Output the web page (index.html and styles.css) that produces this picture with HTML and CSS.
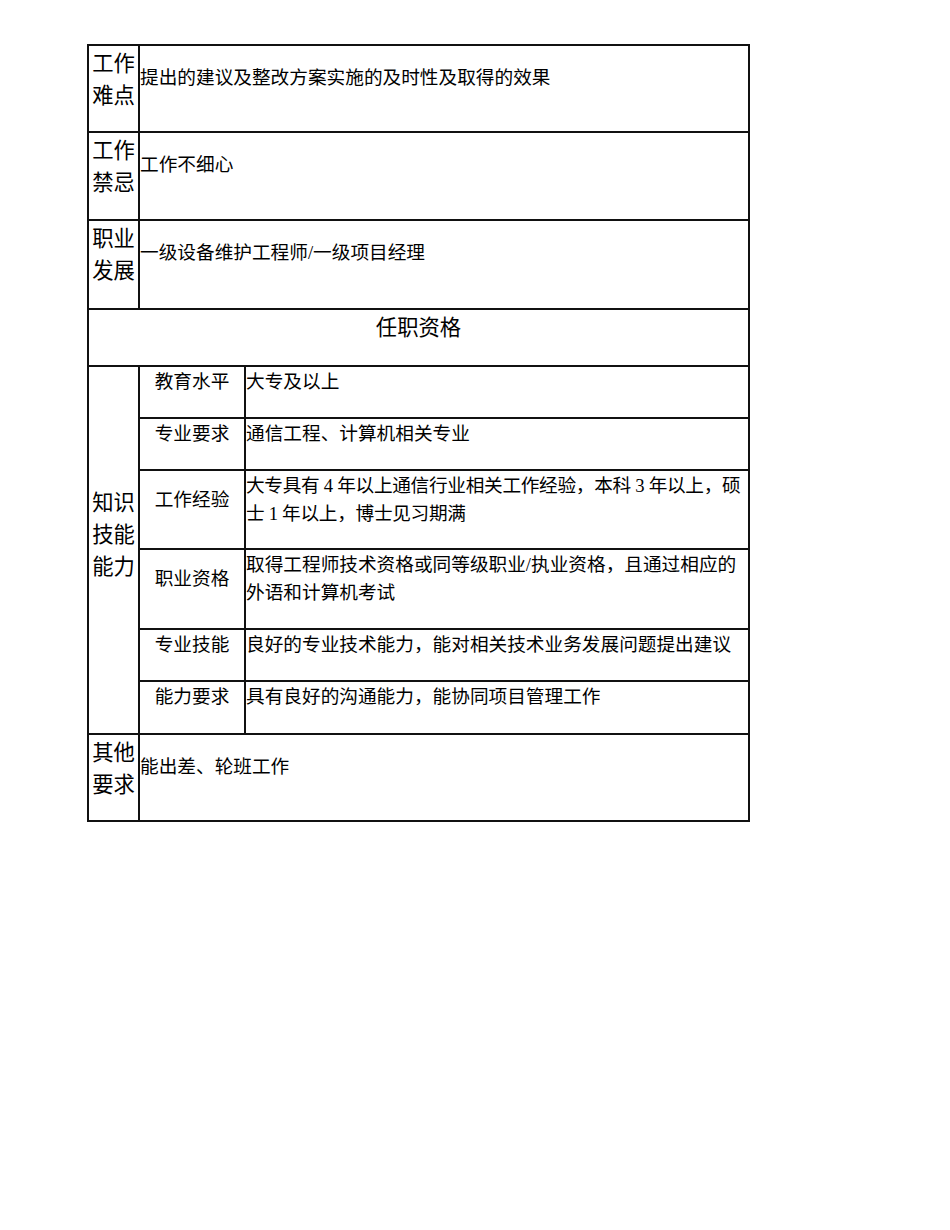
FILE: index.html
```html
<!DOCTYPE html>
<html lang="zh-CN">
<head>
<meta charset="utf-8">
<title>岗位说明</title>
<link rel="stylesheet" href="styles.css">
</head>
<body>
<table class="sheet">
  <colgroup>
    <col class="c1">
    <col class="c2">
    <col class="c3">
  </colgroup>
  <tr class="r-1">
    <td class="label">工作难点</td>
    <td class="text" colspan="2">提出的建议及整改方案实施的及时性及取得的效果</td>
  </tr>
  <tr class="r-2">
    <td class="label">工作禁忌</td>
    <td class="text" colspan="2">工作不细心</td>
  </tr>
  <tr class="r-3">
    <td class="label">职业发展</td>
    <td class="text" colspan="2">一级设备维护工程师/一级项目经理</td>
  </tr>
  <tr class="r-title">
    <td class="title" colspan="3">任职资格</td>
  </tr>
  <tr class="r-s1">
    <td class="label group" rowspan="6">知识技能能力</td>
    <td class="sublabel">教育水平</td>
    <td class="subtext">大专及以上</td>
  </tr>
  <tr class="r-s2">
    <td class="sublabel">专业要求</td>
    <td class="subtext">通信工程、计算机相关专业</td>
  </tr>
  <tr class="r-s3">
    <td class="sublabel two">工作经验</td>
    <td class="subtext tight">大专具有 4 年以上通信行业相关工作经验，本科 3 年以上，硕<br>士 1 年以上，博士见习期满</td>
  </tr>
  <tr class="r-s4">
    <td class="sublabel two">职业资格</td>
    <td class="subtext">取得工程师技术资格或同等级职业/执业资格，且通过相应的<br>外语和计算机考试</td>
  </tr>
  <tr class="r-s5">
    <td class="sublabel">专业技能</td>
    <td class="subtext">良好的专业技术能力，能对相关技术业务发展问题提出建议</td>
  </tr>
  <tr class="r-s6">
    <td class="sublabel">能力要求</td>
    <td class="subtext">具有良好的沟通能力，能协同项目管理工作</td>
  </tr>
  <tr class="r-last">
    <td class="label">其他要求</td>
    <td class="text" colspan="2">能出差、轮班工作</td>
  </tr>
</table>
</body>
</html>
```

FILE: styles.css
```css
html, body {
  margin: 0;
  padding: 0;
  background: #ffffff;
}

body {
  padding: 44px 0 0 87px;
  font-family: "Liberation Serif", "Noto Sans CJK SC", serif;
  color: #000000;
}

.sheet {
  border-collapse: collapse;
  table-layout: fixed;
  width: 661px;
}

.c1 { width: 51px; }
.c2 { width: 106px; }
.c3 { width: 504px; }

.sheet td {
  border: 2px solid #111111;
  vertical-align: top;
  padding: 0;
  font-size: 18.67px;
  line-height: 28px;
  white-space: nowrap;
  overflow: hidden;
}

.r-1 { height: 87px; }
.r-2 { height: 88px; }
.r-3 { height: 89px; }
.r-title { height: 57px; }
.r-s1 { height: 52px; }
.r-s2 { height: 52px; }
.r-s3 { height: 79px; }
.r-s4 { height: 80px; }
.r-s5 { height: 52px; }
.r-s6 { height: 53px; }
.r-last { height: 87px; }

.sheet td.label {
  font-size: 21.33px;
  line-height: 32px;
  text-align: center;
  white-space: normal;
  padding-top: 2px;
}

.sheet td.group {
  padding-top: 120px;
}

.sheet td.text {
  padding-top: 18px;
  padding-left: 0;
}

.sheet td.title {
  font-size: 21.33px;
  line-height: 32px;
  text-align: center;
  padding-top: 2px;
}

.sheet td.sublabel {
  text-align: center;
  padding-top: 1px;
}

.sheet td.sublabel.two {
  padding-top: 15px;
}

.sheet td.subtext {
  padding-top: 1px;
  padding-left: 0;
}

.sheet td.subtext.tight {
  letter-spacing: -0.3px;
}
```
